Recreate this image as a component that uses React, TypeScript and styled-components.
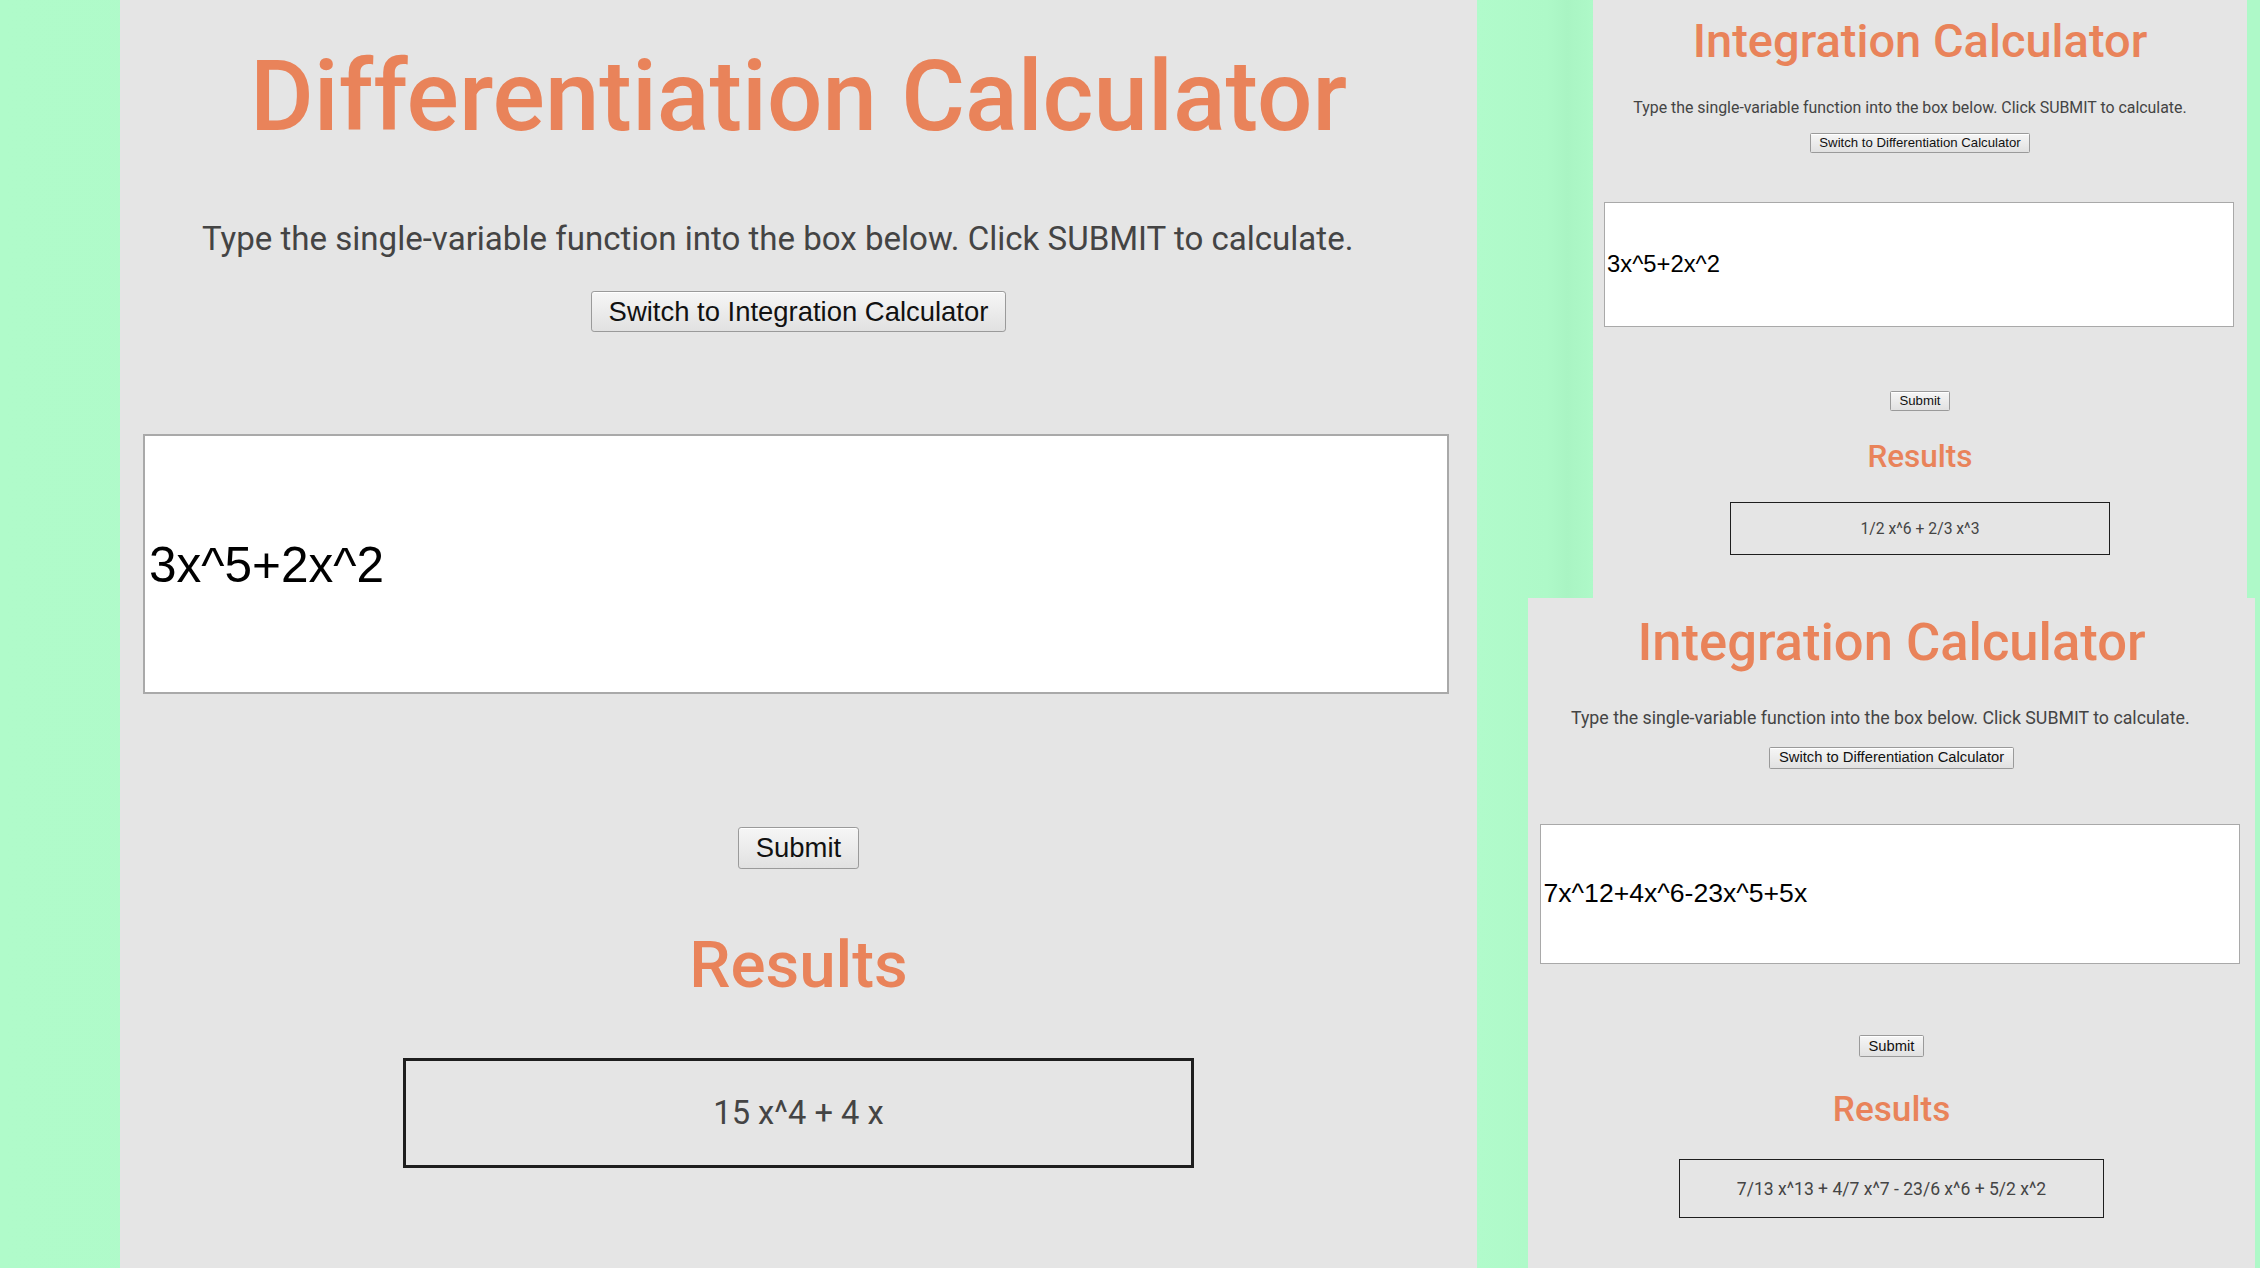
import React from "react";
import styled, { createGlobalStyle } from "styled-components";

// every size below is given for the small (top right) screenshot and
// multiplied by --s for the larger ones
const u = (n: number) => `calc(${n}px * var(--s))`;

const GlobalStyle = createGlobalStyle`
  html, body {
    margin: 0;
    padding: 0;
  }
  body {
    background: #adf8c7;
  }
`;

type CalcProps = {
  scale: number;
  offset?: number;
  title: string;
  other: string;
  input: string;
  result: string;
};

const Calculator = ({ scale, offset = 0, title, other, input, result }: CalcProps) => {
  return (
    <Sheet $s={scale} $offset={offset}>
      <Title>{title}</Title>
      <Hint>
        Type the single-variable function into the box below. Click SUBMIT to
        calculate.
      </Hint>
      <PageButton $gap={15.5}>Switch to {other} Calculator</PageButton>
      <Field readOnly value={input} />
      <PageButton $gap={64}>Submit</PageButton>
      <ResultsTitle>Results</ResultsTitle>
      <ResultBox>{result}</ResultBox>
    </Sheet>
  );
};

export default function App() {
  return (
    <>
      <GlobalStyle />
      <Page>
        <Calculator
          scale={2.08}
          offset={14}
          title="Differentiation Calculator"
          other="Integration"
          input="3x^5+2x^2"
          result="15 x^4 + 4 x"
        />
        <RightColumn>
          <ShotRow $left={116} $right={13}>
            <Calculator
              scale={1}
              title="Integration Calculator"
              other="Differentiation"
              input="3x^5+2x^2"
              result="1/2 x^6 + 2/3 x^3"
            />
          </ShotRow>
          <ShotRow $left={51} $right={5}>
            <Calculator
              scale={1.118}
              title="Integration Calculator"
              other="Differentiation"
              input="7x^12+4x^6-23x^5+5x"
              result="7/13 x^13 + 4/7 x^7 - 23/6 x^6 + 5/2 x^2"
            />
          </ShotRow>
        </RightColumn>
      </Page>
    </>
  );
}

const Page = styled.div`
  display: grid;
  grid-template-columns: 120px 1357px 783px;
  height: 1268px;
  width: 2260px;
  overflow: hidden;
  background: linear-gradient(90deg, #b0fbca 0%, #abf7c5 60%, #b0fbca 100%);

  & > :first-child {
    grid-column: 2;
  }
`;

const RightColumn = styled.div`
  display: grid;
  grid-template-rows: 598px 1fr;
  background: linear-gradient(
    90deg,
    #b1fbcb 0px,
    #aef9c8 70px,
    #a9f4c3 90px,
    #aef9c8 116px
  );
`;

const ShotRow = styled.div<{ $left: number; $right: number }>`
  display: flex;
  padding: 0 ${(p) => p.$right}px 0 ${(p) => p.$left}px;
  min-height: 0;
`;

const Sheet = styled.div<{ $s: number; $offset: number }>`
  --s: ${(p) => p.$s};
  flex: 1;
  display: flex;
  flex-direction: column;
  align-items: center;
  box-sizing: border-box;
  padding-top: calc(${(p) => p.$offset}px + ${u(16.5)});
  background: #e5e5e5;
  overflow: hidden;
`;

const Title = styled.h1`
  margin: 0;
  font-family: Roboto, "Noto Sans", sans-serif;
  font-weight: 500;
  font-size: ${u(47)};
  line-height: 1;
  color: #e9835a;
  white-space: nowrap;
`;

const Hint = styled.p`
  margin: ${u(34.9)} ${u(20)} 0 0;
  font-family: Roboto, "Noto Sans", sans-serif;
  font-size: ${u(15.9)};
  line-height: 1.2;
  color: #444444;
  white-space: nowrap;
`;

const PageButton = styled.button<{ $gap: number }>`
  margin-top: ${(p) => u(p.$gap)};
  height: ${u(20)};
  padding: 0 ${u(8)};
  box-sizing: border-box;
  font-family: "Liberation Sans", Arial, sans-serif;
  font-size: ${u(13.2)};
  line-height: 1;
  color: #111;
  white-space: nowrap;
  background: linear-gradient(#f6f6f6, #e1e1e1);
  border: 1px solid #9a9a9a;
  border-radius: ${u(1.5)};
  box-shadow: inset 0 1px 0 #ffffff;
`;

const Field = styled.input`
  align-self: stretch;
  min-width: 0;
  margin: ${u(49)} ${u(13.5)} 0 ${u(11)};
  height: ${u(125)};
  box-sizing: border-box;
  padding: 0 ${u(2)};
  font-family: "Liberation Sans", Arial, sans-serif;
  font-size: ${u(23.8)};
  color: #000;
  background: #fff;
  border: ${u(1)} solid #a9a9a9;
  outline: none;
`;

const ResultsTitle = styled.h2`
  margin: ${u(30.5)} 0 0;
  font-family: Roboto, "Noto Sans", sans-serif;
  font-weight: 500;
  font-size: ${u(31.5)};
  line-height: 1;
  color: #e9835a;
`;

const ResultBox = styled.div`
  margin-top: ${u(29)};
  width: ${u(380)};
  height: ${u(53)};
  box-sizing: border-box;
  display: flex;
  align-items: center;
  justify-content: center;
  font-family: Roboto, "Noto Sans", sans-serif;
  font-size: ${u(15.7)};
  color: #444444;
  border: ${u(1.5)} solid #1e1e1e;
  white-space: nowrap;
`;
